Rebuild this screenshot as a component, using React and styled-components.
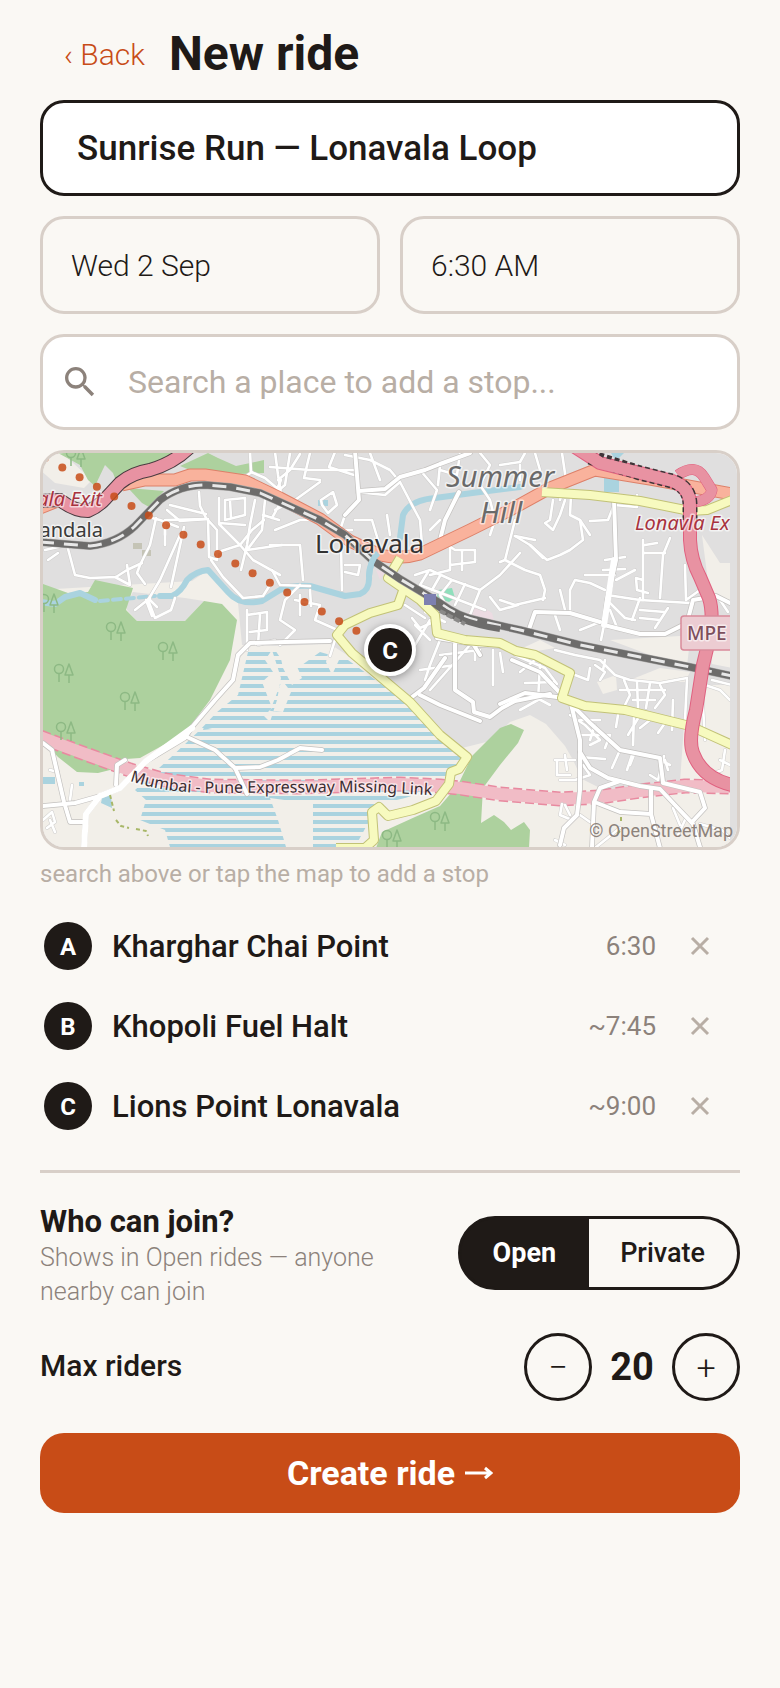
import React from "react";
import styled, { createGlobalStyle } from "styled-components";
import { MdSearch } from "react-icons/md";

const COLORS = {
  paper: "#faf8f4",
  white: "#ffffff",
  ink: "#1f1a17",
  line: "#d8cfc8",
  muted: "#8c827b",
  faint: "#b8aea5",
  accent: "#c84c17",
};

const STOPS = [
  { id: "A", name: "Kharghar Chai Point", time: "6:30" },
  { id: "B", name: "Khopoli Fuel Halt", time: "~7:45" },
  { id: "C", name: "Lions Point Lonavala", time: "~9:00" },
];

const App = () => {
  const [stops, setStops] = React.useState(STOPS);
  const [access, setAccess] = React.useState("open");
  const [riders, setRiders] = React.useState(20);

  return (
    <Page>
      <GlobalStyle />
      <Header>
        <BackLink href="#rides">‹ Back</BackLink>
        <Title>New ride</Title>
      </Header>

      <Form onSubmit={(event) => event.preventDefault()}>
        <NameInput
          aria-label="Ride name"
          defaultValue="Sunrise Run — Lonavala Loop"
        />
        <FieldRow>
          <FieldInput aria-label="Date" defaultValue="Wed 2 Sep" />
          <FieldInput aria-label="Start time" defaultValue="6:30 AM" />
        </FieldRow>
        <SearchField>
          <MdSearch size={40} aria-hidden="true" />
          <SearchInput
            type="search"
            aria-label="Search a place"
            placeholder="Search a place to add a stop..."
          />
        </SearchField>

        <div>
          <MapFrame>
            <RideMap />
            <Pin>C</Pin>
            <Attribution>© OpenStreetMap</Attribution>
          </MapFrame>
          <Hint>search above or tap the map to add a stop</Hint>
        </div>

        <StopList>
          {stops.map((stop) => (
            <Stop key={stop.id}>
              <StopBadge>{stop.id}</StopBadge>
              <StopName>{stop.name}</StopName>
              <StopTime>{stop.time}</StopTime>
              <RemoveButton
                type="button"
                aria-label={`Remove ${stop.name}`}
                onClick={() =>
                  setStops(stops.filter((item) => item.id !== stop.id))
                }
              >
                <svg width="20" height="20" viewBox="0 0 20 20">
                  <path d="M2 2 18 18M18 2 2 18" />
                </svg>
              </RemoveButton>
            </Stop>
          ))}
        </StopList>

        <Divider />

        <SettingRow>
          <SettingText>
            <Question>Who can join?</Question>
            <Note>Shows in Open rides — anyone nearby can join</Note>
          </SettingText>
          <Toggle role="group" aria-label="Who can join?">
            <ToggleButton
              type="button"
              aria-pressed={access === "open"}
              onClick={() => setAccess("open")}
            >
              Open
            </ToggleButton>
            <ToggleButton
              type="button"
              aria-pressed={access === "private"}
              onClick={() => setAccess("private")}
            >
              Private
            </ToggleButton>
          </Toggle>
        </SettingRow>

        <SettingRow>
          <SettingLabel>Max riders</SettingLabel>
          <Stepper>
            <StepButton
              type="button"
              aria-label="Fewer riders"
              onClick={() => setRiders(riders - 1)}
            >
              −
            </StepButton>
            <Count>{riders}</Count>
            <StepButton
              type="button"
              aria-label="More riders"
              onClick={() => setRiders(riders + 1)}
            >
              +
            </StepButton>
          </Stepper>
        </SettingRow>

        <SubmitButton type="submit">
          Create ride
          <svg width="28" height="16" viewBox="0 0 28 16" aria-hidden="true">
            <path d="M0 8H26M20 3 26 8 20 13" />
          </svg>
        </SubmitButton>
      </Form>
    </Page>
  );
};

const RAIL =
  "M40 542 90 546Q117 543 135 526L160 500Q180 485 205 485L230 487 260 493 320 520 345 535 372 560 400 579 440 603Q458 617 480 621L520 630 580 645 640 657 690 667 732 676";
const TRUNK =
  "M40 508 60 500M122 485 145 480 175 480 190 475 205 475 245 481 280 498 320 519 350 541 380 555Q400 560 420 554L470 530 510 510 550 488 595 470 650 479 732 494";
const MOTORWAY =
  "M575 447 600 463 640 473 672 481Q690 487 690 505L690 540Q691 560 700 577L709 598Q713 610 711 632L703 665 696 710Q688 740 693 753 702 778 732 785";
const MOTORWAY_WEST =
  "M40 501 60 500Q74 511 88 511 98 507 106 498L120 483Q132 473 150 470 174 463 190 447";
const TUNNEL =
  "M40 737 80 752 130 770 165 780 210 786 300 787 400 784 440 786 460 788 500 794 560 799 600 797 640 791 685 786 732 787";
const LOOP = "M678 475Q695 463 704 477L712 490Q710 500 695 502";
const YELLOW = [
  "M400 558 388 578 420 600 435 615 437 633 465 640 500 643 516 651 535 655 570 673 562 698 585 706 625 710 690 726 732 745",
  "M404 588 398 605 370 613 345 625 337 635 352 653 410 702 440 735 467 757 459 769 451 772 449 784 436 801 413 810 388 816 379 807 372 812 374 840 365 848 336 848",
  "M542 492 590 495 640 501 690 511 707 510 732 500",
];

// streets wide enough to be cased
const STREETS = [
  "M355 451 359 500 345 515M359 491 385 489 400 477 425 470 440 464 470 453M459 492 445 520 440 540",
  "M614 500 616 560 607 600 604 625M600 622 570 613 535 612 528 632M604 625 640 634 665 634 687 623 693 600 716 596 732 604",
  "M43 806 75 803 100 796 120 788 145 762 185 738 192 727 215 700 233 680 238 655 250 643 285 642 330 641",
  "M100 796 86 814 84 848",
  "M187 737 200 743 215 750 235 768 260 767 278 760 300 748 322 750",
  "M43 743 52 750 64 802 70 822 85 822M116 785 117 765 125 760M235 768 247 794",
  "M437 638 480 645 505 646M472 642 480 655M455 644 455 690 473 702 474 712 490 717 502 708 515 701 550 694",
  "M412 697 424 688 445 658M420 695 440 705 480 721M571 704 580 740 580 790 577 815 564 828 560 845M571 704 590 723 620 750 660 758 663 782",
  "M580 752 590 768 608 778 640 786 660 789 675 805 693 824 700 847M663 783 700 792 705 808 692 822M620 781 600 788 594 802 592 847",
  "M597 803 620 812 651 814 651 790M651 814 660 848M500 704 525 693 565 698 540 672 512 660",
];

const LANES = [
  "M250 451 251 472 265 478 278 489M252 472 240 480M262 485 273 498 281 480",
  "M156 518 150 545 140 565 137 573 145 584M165 535 165 520 205 519M148 517 160 520 178 527",
  "M167 510 180 521 208 519 209 557 217 560 217 530 208 520M199 492 200 506 206 518M170 505 206 514",
  "M180 535 160 580 148 600 155 618 171 610 175 598M165 527 165 545M184 527 171 587M211 560 223 577 243 598 263 596 270 585",
  "M150 598 135 610M146 600 152 616M150 600 157 607",
  "M219 498 219 524 240 545 253 560 280 575M225 500 245 498 245 515 225 520ZM230 500 231 518M219 523 245 525M240 545 252 530 264 520",
  "M255 500 250 525 247 545 241 570M266 490 262 530 247 550 282 545M279 520 263 515M215 553 240 545",
  "M45 550 67 545 75 575 90 578 116 577 127 570 142 563M115 577 130 585 127 565M48 560 58 553",
  "M247 610 247 650M247 615 267 612 267 630 250 632M260 615 258 645 275 640",
  "M275 452 278 475 282 500 272 518M300 454 290 470 278 480M275 510 295 500 320 482",
  "M290 453 285 485 279 490M270 467 310 470 354 470M310 453 304 478 320 480M335 452 329 467 354 475",
  "M321 500 333 492 337 505 328 513 322 505ZM345 515 340 530 352 530M355 520 372 520 378 540M387 515 390 535",
  "M345 455 370 460 390 470 400 482 412 505 420 520 422 545M370 453 380 480M400 482 385 495 357 492",
  "M275 530 300 520 320 520 340 540M270 545 300 545 303 580M272 570 280 585 310 586M341 545 342 590M345 565 360 565 358 575 345 572",
  "M420 470 437 490 430 510M440 465 438 485M460 453 457 475 440 470M480 453 490 465 480 485 490 500 495 520 490 535",
  "M440 520 430 530M440 540 455 550 475 550 475 562 450 565M450 545 450 570 430 575M462 550 462 570",
  "M415 575 430 570 452 580 480 590 500 575 520 553M428 572 420 585M440 576 432 590M452 580 440 595 450 612M465 584 455 605M480 590 470 615M490 597 500 610 518 605M420 585 485 610",
  "M300 585 285 600 280 620 295 630 280 645M295 600 320 605 315 620 342 632M300 595 300 615M310 590 311 606M335 640 330 656",
  "M500 465 520 462 525 453M520 465 520 480M535 453 540 470M562 453 566 480 560 500M578 480 590 470 592 453",
  "M553 500 550 520 545 523 553 530 560 515 565 500M571 495 570 515 580 520 583 540 570 550 560 555 547 560 530 545 515 536",
  "M515 520 505 560 525 570 540 575 545 590 543 600M505 560 500 562M515 536 535 540M530 545 543 558M500 600 515 605 545 598M580 520 590 535",
  "M590 521 608 520 614 505M614 505 637 507 637 495M643 540 643 600M643 553 665 553M645 545 657 543M670 538 663 555 660 598M643 580 636 578 637 590 648 593",
  "M605 560 625 557M603 570 625 569M585 575 615 575M616 580 635 570M607 595 640 600 690 603M640 598 632 620",
  "M570 590 575 580 590 583 605 590M570 590 570 612M560 590 565 610M555 615 560 630M580 630 605 620 601 640M607 600 625 618 635 620M610 610 618 630",
  "M640 610 665 612M640 618 660 620M668 608 655 628M685 565 686 600 700 590M720 600 728 612",
  "M535 660 520 672M540 665 538 700 520 710M525 683 555 682M535 697 550 705M515 655 545 668 557 684",
  "M440 640 430 665 425 680M440 655 480 650M420 670 455 665M470 645 430 690M475 650 475 660M493 650 493 685M500 653 503 672",
  "M555 650 575 655 600 660 615 675 630 680 660 683 687 678M590 668 588 680 575 675M595 665 605 672 600 680M605 660 603 670",
  "M624 680 630 695 625 705M637 682 638 708M650 683 646 708M660 685 665 695 655 708M673 700 672 730M620 690 665 690M633 700 655 700",
  "M618 715 616 727M634 715 633 745M640 715 628 735M650 720 640 728M665 723 658 733",
  "M570 715 585 725 600 740 590 745M580 735 610 735M595 725 590 740M580 720 600 720M610 735 605 748M620 750 612 768M632 755 627 770M635 752 630 765",
  "M555 760 575 760M557 760 557 775 570 775M565 755 567 770M580 757 605 759M583 765 590 775 575 780 560 780M650 755 670 765M664 756 658 780 650 775M665 760 668 770",
  "M565 805 570 815M562 804 560 815 572 820M580 815 590 822M555 840 565 845M595 848 620 828M673 808 680 825M700 824 722 830 730 838M685 820 678 835",
  "M725 750 722 770 712 774M720 760 730 765M705 685 720 690 730 700M712 680 732 685M702 690 705 740M687 680 685 720",
  "M43 820 52 812 55 822 47 828M50 820 55 832M70 800 72 785M50 770 58 772",
  "M438 620 420 628 412 618M425 612 445 622M430 620 415 645M415 625 430 640M405 605 425 618",
];

const TREES = [
  [110, 626], [162, 646], [58, 668], [124, 696], [60, 726],
  [70, 452], [43, 598], [434, 816], [386, 834],
];

const ROUTE_DOTS = Array.from({ length: 19 }, (_, i) => [
  45 + i * 17.3,
  458 + i * 9.6,
]);

const RideMap = () => (
  <MapSvg
    viewBox="43 453 694 394"
    preserveAspectRatio="xMidYMid slice"
    role="img"
    aria-label="Map of Lonavala with the ride route"
  >
    <defs>
      <pattern
        id="water"
        x="0"
        y="652"
        width="8"
        height="8"
        patternUnits="userSpaceOnUse"
      >
        <rect width="8" height="4" fill="#aad3df" />
      </pattern>
      <clipPath id="tiles">
        <rect x="0" y="453" width="730" height="394" />
      </clipPath>
      <g id="tree" fill="none" stroke="#8db984" strokeWidth="1.5">
        <circle cx="4" cy="1" r="4.5" />
        <path d="M4 5V14M14-4 10 7H18ZM14 7V15" />
      </g>
    </defs>
    <rect x="0" y="400" width="800" height="500" fill="#e0dfdf" />

    <g clipPath="url(#tiles)" strokeLinejoin="round">
      <g fill="#f2efe9">
        <path d="M40 453H62L92 480 84 488 55 483 40 470Z" />
        <path d="M192 581 208 570 238 603 242 645 275 646 330 644 370 670 412 703 462 748 490 741 510 722 530 715 546 724 565 746 573 760 582 779 610 793 680 782 684 725 732 748V848H40V590Z" />
        <path d="M702 535 720 563H732V600L710 597ZM610 640 680 636 690 640 687 666 650 655ZM597 682 616 675 617 690 603 694ZM712 640H732V668L712 664ZM660 668 690 672 685 682 630 680ZM707 685H732V740L700 728Z" />
        <path d="M512 653 540 640 555 648 525 653Z" />
      </g>
      {/* built-up land between the river and the wood */}
      <path d="M127 603 133 592 185 598 204 601 185 621H137L127 610Z" fill="#e0dfdf" />
      <path
        d="M465 614 480 605 492 613 494 621ZM376 570 385 572 380 580Z"
        fill="#ecdbe2"
      />
      <g fill="#add19e">
        <path d="M58 453H178L170 463 150 468 118 486 113 473 105 465 95 486 88 480 80 465Z" />
        <path d="M128 488 164 491 149 507 142 503Z" />
        <path d="M180 466 208 453 218 458 236 466 264 460V473L240 474 195 472Z" />
        <path d="M40 583 68 593 88 592 95 580 133 588 126 610 137 621H185L204 601 222 604 237 620 230 660 210 700 185 733 140 758 126 759 118 768 98 773 77 772 58 757 40 738Z" />
        <path d="M376 848 382 832 415 817 440 806 458 785 472 756 500 728 511 724 524 730 518 743 500 765 483 788 481 823 494 815 504 822 511 830 524 822 530 830 529 848Z" />
      </g>
      <path
        d="M248 652 275 650 290 672 302 665 320 652 348 660 410 705 466 757 447 776 430 790 405 798 380 804 367 825 355 847H313V804L270 798 278 820 286 847H170L165 830 140 820 146 800 135 790 170 758 200 730 217 712 238 695Z"
        fill="url(#water)"
      />
      <path
        d="M278 645 292 655 302 678 292 685 283 668ZM282 680 291 692 283 712 270 711ZM330 645 339 660 332 675 326 662ZM272 650 265 660 273 672 262 682 272 708 264 716 270 722 277 700 281 678Z"
        fill="#f2efe9"
      />
      <path
        d="M43 777H55V784H43ZM79 782H84V786H79ZM102 798 111 795 112 808 101 803ZM604 478H619V492H604ZM611 453H624L616 461ZM318 500H328V506H318ZM204 727 212 729 203 730Z"
        fill="#aad3df"
      />
      <g fill="none" stroke="#aad3df" strokeWidth="6" strokeLinecap="round">
        <path d="M40 602 55 604 65 597 80 593 95 600M160 596 172 596Q181 592 187 580 196 571 208 570L228 592Q240 606 262 601L280 590Q292 585 310 586L345 596 360 594Q370 590 369 576 369 563 380 553M400 538 403 515Q410 500 435 498L480 492 520 487" />
        <path d="M100 601 155 596" strokeWidth="4" strokeDasharray="8 5" />
      </g>
      <path d="M438 590 452 588 455 598 449 602 437 598Z" fill="#8fdfbc" />
      <path d="M133 543H142V550H151V556H142V549H133Z" fill="#c5c4b6" />

      <path d={TUNNEL} fill="none" stroke="#e88aa0" strokeWidth="15" strokeDasharray="9 4" />
      <path d={TUNNEL} fill="none" stroke="#f1bcc6" strokeWidth="12" />

      <g fill="none" strokeLinecap="round">
        {LANES.map((d) => (
          <path key={d} d={d} stroke="#cfcecd" strokeWidth="3.6" />
        ))}
        {LANES.map((d) => (
          <path key={d} d={d} stroke="#ffffff" strokeWidth="2.6" />
        ))}
        {STREETS.map((d) => (
          <path key={d} d={d} stroke="#c3c1bf" strokeWidth="5.4" />
        ))}
        {STREETS.map((d) => (
          <path key={d} d={d} stroke="#ffffff" strokeWidth="4" />
        ))}
        <path d="M100 796 86 814 84 848M100 796 120 788 145 762 192 728M604 625 614 560" stroke="#ffffff" strokeWidth="6" />
      </g>
      <path
        d="M110 795 114 811M116 820 121 826 129 828M136 829 146 831 148 836M621 817V821M620 831 616 835"
        fill="none"
        stroke="#a8b768"
        strokeWidth="2"
        strokeDasharray="4 3"
      />

      <g fill="none">
        <path d={TRUNK} stroke="#dd8069" strokeWidth="13" />
        <path d={TRUNK} stroke="#f9b29c" strokeWidth="11" />
        {YELLOW.map((d) => (
          <path key={d} d={d} stroke="#c2c277" strokeWidth="10" />
        ))}
        {YELLOW.map((d) => (
          <path key={d} d={d} stroke="#f7fabf" strokeWidth="8" />
        ))}
        <path d={RAIL} stroke="#a7a6a5" strokeWidth="8" />
        <path d={RAIL} stroke="#6d6c6b" strokeWidth="7" />
        <path d={RAIL} stroke="#e8e8e8" strokeWidth="3" strokeDasharray="14 10" />
        <path d="M432 602Q454 622 500 629" stroke="#6d6c6b" strokeWidth="6" />
        <path d="M440 611 465 624" stroke="#8b8a89" strokeWidth="4" strokeDasharray="6 2" />
        <path d="M378 553Q370 560 369 576" stroke="#aad3df" strokeWidth="6" />

        <path d={MOTORWAY_WEST} stroke="#4a3b40" strokeWidth="14" />
        <path d={MOTORWAY_WEST} stroke="#e892a2" strokeWidth="12" />
        <path d={LOOP} stroke="#e0607f" strokeWidth="11" />
        <path d={LOOP} stroke="#e892a2" strokeWidth="10" />
        <path d={MOTORWAY} stroke="#e0607f" strokeWidth="14" />
        <path
          d="M590 457 640 473 672 481Q690 487 690 505L690 520"
          stroke="#403539"
          strokeWidth="15"
          strokeDasharray="5 3"
        />
        <path d={MOTORWAY} stroke="#e892a2" strokeWidth="12" />
      </g>
      <path d="M424 594H436V605H424Z" fill="#7d80b0" />
      {TREES.map(([x, y]) => (
        <use key={`${x}-${y}`} href="#tree" x={x - 3} y={y} />
      ))}

      <rect
        x="681"
        y="616"
        width="70"
        height="34"
        rx="3"
        fill="#ecccd2"
        stroke="#d98a9b"
        strokeWidth="1.5"
      />
      <MapText x="687" y="640" $size={19} $weight={500} fill="#7d4f5c">
        MPE
      </MapText>
      <MapText x="102" y="506" textAnchor="end" $size={20} $italic fill="#a8323e">
        ala Exit
      </MapText>
      <MapText x="103" y="537" textAnchor="end" $size={20} fill="#3a3a3a">
        andala
      </MapText>
      <MapText x="315" y="553" $size={26} fill="#333333">
        Lonavala
      </MapText>
      <MapText x="446" y="487" $size={29} $italic fill="#6a6a6a">
        Summer
      </MapText>
      <MapText x="480" y="523" $size={29} $italic fill="#6a6a6a">
        Hill
      </MapText>
      <MapText x="635" y="530" $size={20} $italic fill="#a8323e">
        Lonavla Ex
      </MapText>
      <path id="expressway" d="M130 781Q165 793 210 793L370 792 446 796" fill="none" />
      <MapText $size={16} fill="#3a2d31">
        <textPath href="#expressway">
          Mumbai - Pune Expressway Missing Link
        </textPath>
      </MapText>
    </g>

    <g fill={COLORS.accent} fillOpacity="0.85">
      {ROUTE_DOTS.map(([x, y]) => (
        <circle key={x} cx={x} cy={y} r="4" />
      ))}
    </g>
  </MapSvg>
);

const GlobalStyle = createGlobalStyle`
  *, *::before, *::after {
    box-sizing: border-box;
  }

  body {
    margin: 0;
    background-color: ${COLORS.paper};
    color: ${COLORS.ink};
    font-family: Roboto, "Liberation Sans", sans-serif;
  }

  button, input {
    font: inherit;
    color: inherit;
  }

  button {
    padding: 0;
    border: none;
    background: none;
    cursor: pointer;
  }
`;

const Page = styled.main`
  padding: 16px 40px;
`;

const Header = styled.header`
  display: flex;
  align-items: center;
  gap: 24px;
  padding: 0 24px;
  margin-bottom: 8px;
`;

const BackLink = styled.a`
  font-size: 30px;
  font-weight: 300;
  color: ${COLORS.accent};
  text-decoration: none;
`;

const Title = styled.h1`
  margin: 0;
  font-size: 48px;
  font-weight: 700;
  line-height: 76px;
`;

const Form = styled.form`
  display: flex;
  flex-direction: column;
  gap: 20px;
`;

const Input = styled.input`
  min-width: 0;
  height: 98px;
  border: 3px solid ${COLORS.line};
  border-radius: 24px;
  background-color: transparent;
  outline-offset: 2px;
`;

const NameInput = styled(Input)`
  height: 96px;
  padding: 0 34px;
  border-color: ${COLORS.ink};
  background-color: ${COLORS.white};
  font-size: 35px;
  font-weight: 500;
`;

const FieldRow = styled.div`
  display: grid;
  grid-template-columns: 1fr 1fr;
  gap: 20px;
`;

const FieldInput = styled(Input)`
  padding: 0 28px;
  font-size: 30px;
  font-weight: 300;
`;

const SearchField = styled.div`
  display: flex;
  align-items: center;
  gap: 28px;
  height: 96px;
  padding: 0 17px;
  border: 3px solid ${COLORS.line};
  border-radius: 24px;
  background-color: ${COLORS.white};
  color: ${COLORS.muted};
`;

const SearchInput = styled.input`
  flex: 1;
  min-width: 0;
  padding: 0;
  border: none;
  outline: none;
  background: none;
  font-size: 32px;

  &::placeholder {
    color: ${COLORS.faint};
  }
`;

const MapFrame = styled.div`
  position: relative;
  height: 400px;
  border: 3px solid ${COLORS.line};
  border-radius: 24px;
  overflow: hidden;
`;

const MapSvg = styled.svg`
  display: block;
  width: 100%;
  height: 100%;
`;

const MapText = styled.text`
  font-family: "Noto Sans", sans-serif;
  font-size: ${(props) => props.$size}px;
  font-weight: ${(props) => props.$weight || 400};
  font-style: ${(props) => (props.$italic ? "italic" : "normal")};
  paint-order: stroke;
  stroke: rgba(255, 255, 255, 0.6);
  stroke-width: 3px;
`;

const Pin = styled.span`
  position: absolute;
  top: 50%;
  left: 50%;
  width: 52px;
  height: 52px;
  margin: -26px 0 0 -26px;
  border: 4px solid ${COLORS.white};
  border-radius: 50%;
  background-color: ${COLORS.ink};
  box-shadow: 0 2px 8px rgba(0, 0, 0, 0.35);
  color: ${COLORS.white};
  font-size: 24px;
  font-weight: 700;
  line-height: 46px;
  text-align: center;
`;

const Attribution = styled.small`
  position: absolute;
  right: 4px;
  bottom: 4px;
  color: ${COLORS.muted};
  font-size: 18px;
  line-height: 24px;
`;

const Hint = styled.p`
  margin: 8px 0 0;
  color: ${COLORS.faint};
  font-size: 24px;
  line-height: 32px;
`;

const StopList = styled.ul`
  margin: -4px 0 0;
  padding: 0 0 0 4px;
  list-style: none;
`;

const Stop = styled.li`
  display: flex;
  align-items: center;
  height: 80px;
`;

const StopBadge = styled.span`
  flex: none;
  width: 48px;
  height: 48px;
  margin-right: 20px;
  border-radius: 50%;
  background-color: ${COLORS.ink};
  color: ${COLORS.white};
  font-size: 24px;
  font-weight: 700;
  line-height: 50px;
  text-align: center;
`;

const StopName = styled.span`
  flex: 1;
  font-size: 31px;
  font-weight: 500;
`;

const StopTime = styled.span`
  color: ${COLORS.muted};
  font-size: 26px;
`;

const RemoveButton = styled.button`
  display: grid;
  place-items: center;
  width: 80px;
  height: 48px;
  margin-left: 4px;

  svg {
    fill: none;
    stroke: ${COLORS.faint};
    stroke-width: 3;
  }
`;

const Divider = styled.hr`
  width: 100%;
  height: 3px;
  margin: 4px 0;
  border: none;
  background-color: ${COLORS.line};
`;

const SettingRow = styled.div`
  display: flex;
  align-items: center;
  justify-content: space-between;
  gap: 48px;
`;

const SettingText = styled.div`
  flex: 1;
  padding-top: 6px;
`;

const SettingLabel = styled.span`
  font-size: 30px;
  font-weight: 500;
`;

const Question = styled(SettingLabel)`
  display: block;
  font-size: 31px;
  font-weight: 700;
  line-height: 38px;
`;

const Note = styled.p`
  margin: 0;
  color: ${COLORS.muted};
  font-size: 25px;
  font-weight: 300;
  line-height: 34px;
`;

const Toggle = styled.div`
  display: flex;
  height: 74px;
  border: 3px solid ${COLORS.ink};
  border-radius: 37px;
`;

const ToggleButton = styled.button`
  padding: 0 32px;
  font-size: 27px;
  font-weight: 500;

  &:first-child {
    border-radius: 34px 0 0 34px;
  }

  &:last-child {
    border-radius: 0 34px 34px 0;
  }

  &[aria-pressed="true"] {
    background-color: ${COLORS.ink};
    box-shadow: 0 0 0 1px ${COLORS.ink};
    color: ${COLORS.white};
    font-weight: 700;
  }
`;

const Stepper = styled.div`
  display: flex;
  align-items: center;
  margin-top: 4px;
`;

const StepButton = styled.button`
  width: 68px;
  height: 68px;
  border: 3px solid ${COLORS.ink};
  border-radius: 50%;
  font-size: 34px;
  font-weight: 300;
`;

const Count = styled.output`
  width: 80px;
  font-size: 38px;
  font-weight: 700;
  text-align: center;
`;

const SubmitButton = styled.button`
  display: flex;
  align-items: center;
  justify-content: center;
  gap: 10px;
  height: 80px;
  margin-top: 12px;
  border-radius: 24px;
  background-color: ${COLORS.accent};
  color: ${COLORS.white};
  font-size: 34px;
  font-weight: 700;

  svg {
    fill: none;
    stroke: currentColor;
    stroke-width: 3;
  }
`;

export default App;
